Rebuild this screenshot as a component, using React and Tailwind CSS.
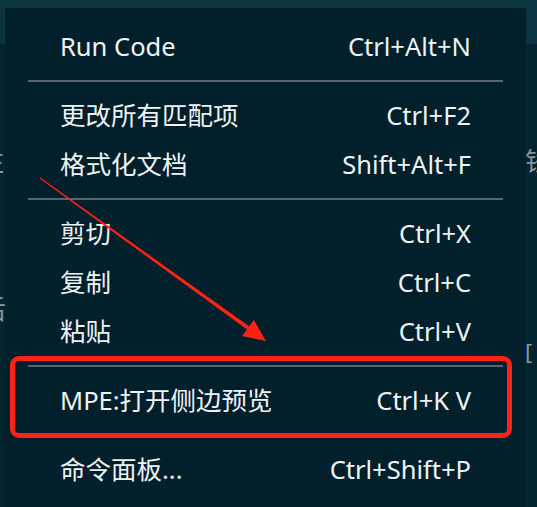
import React from "react";

const font = { fontFamily: '"Noto Sans", "Noto Sans CJK SC", sans-serif' };

function Item({ label, keys }) {
  return (
    <div className="flex h-[49px] items-center justify-between px-[55px] text-[25.5px] leading-none text-[#eef3f5]">
      <span>{label}</span>
      <span>{keys}</span>
    </div>
  );
}

function Sep() {
  return (
    <div className="flex h-[20px] items-center px-[23px]">
      <div className="h-[2px] w-full bg-[#56666c]" />
    </div>
  );
}

export default function App() {
  return (
    <div className="relative h-[507px] w-[537px] overflow-hidden bg-[#04252f]" style={font}>
      {/* background editor bits */}
      <div className="absolute left-0 top-0 h-[8px] w-full bg-[#0b3541]" />
      <div className="absolute left-0 top-0 h-[44px] w-[5px] bg-[#0b3541]" />
      <div className="absolute right-0 top-0 h-[44px] w-[11px] bg-[#0b3541]" />
      <div className="absolute left-[-22px] top-[148px] text-[26px] leading-none text-[#8a979c]">注</div>
      <div className="absolute left-[-20px] top-[296px] text-[26px] leading-none text-[#8a979c]">后</div>
      <div className="absolute left-[-20px] top-[326px] text-[20px] leading-none text-[#8a979c]">设</div>
      <div className="absolute left-[-14px] top-[388px] text-[24px] leading-none text-[#8a979c]">o</div>
      <div className="absolute left-[525px] top-[148px] text-[26px] leading-none text-[#8a979c]">钱</div>
      <div className="absolute left-[525px] top-[340px] text-[22px] leading-none text-[#8a979c]">[</div>

      {/* menu */}
      <div className="relative ml-[5px] mt-[8px] h-[520px] w-[521px] bg-[#01202b] pt-[14px]">
        <Item label="Run Code" keys="Ctrl+Alt+N" />
        <Sep />
        <Item label="更改所有匹配项" keys="Ctrl+F2" />
        <Item label="格式化文档" keys="Shift+Alt+F" />
        <Sep />
        <Item label="剪切" keys="Ctrl+X" />
        <Item label="复制" keys="Ctrl+C" />
        <Item label="粘贴" keys="Ctrl+V" />
        <Sep />
        <Item label="MPE:打开侧边预览" keys="Ctrl+K V" />
        <Sep />
        <Item label="命令面板..." keys="Ctrl+Shift+P" />
      </div>

      {/* red highlight box */}
      <div className="absolute left-[10px] top-[356px] h-[82px] w-[502px] rounded-[9px] border-[5px] border-[#ff2216]" />

      {/* red arrow */}
      <svg className="absolute left-0 top-0" width="537" height="507" viewBox="0 0 537 507">
        <polygon points="39.7,178.4 40.3,177.6 252.2,328.4 249.8,331.6" fill="#ff2216" />
        <polygon points="266,341 242.2,336.1 253.8,319.9" fill="#ff2216" />
      </svg>
    </div>
  );
}
